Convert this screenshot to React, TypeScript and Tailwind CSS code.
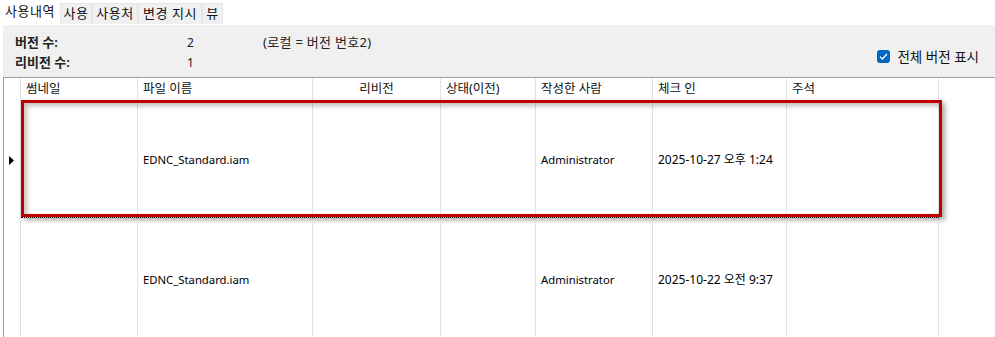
import React from "react";

const FONT = { fontFamily: '"Noto Sans", "Noto Sans CJK KR", sans-serif' };

const TABS = [
  { label: "사용내역", w: "w-[60px]", active: true },
  { label: "사용", w: "w-[32px]" },
  { label: "사용처", w: "w-[46px]" },
  { label: "변경 지시", w: "w-[64px]" },
  { label: "뷰", w: "w-[21px]" },
];

const COLS = [
  { label: "썸네일", w: "w-[117px]" },
  { label: "파일 이름", w: "w-[175px]" },
  { label: "리비전", w: "w-[128px]", center: true },
  { label: "상태(이전)", w: "w-[95px]" },
  { label: "작성한 사람", w: "w-[117px]" },
  { label: "체크 인", w: "w-[134px]" },
  { label: "주석", w: "w-[152px]" },
];

const ROWS = [
  { file: "EDNC_Standard.iam", author: "Administrator", date: "2025-10-27 오후 1:24", current: true },
  { file: "EDNC_Standard.iam", author: "Administrator", date: "2025-10-22 오전 9:37" },
];

function Row({ row }: { row: (typeof ROWS)[number] }) {
  const cells = ["", row.file, "", "", row.author, row.date, ""];
  return (
    <div className="relative flex h-[120px]">
      <div className="flex w-[17px] items-center justify-center border-r border-[#e3e3e3]">
        {row.current && (
          <svg width="6" height="9" viewBox="0 0 6 9">
            <path d="M0 0 L5 4.5 L0 9 Z" fill="#000" />
          </svg>
        )}
      </div>
      {cells.map((c, i) => (
        <div
          key={i}
          className={`${COLS[i].w} flex items-center border-r border-[#e3e3e3] pl-[5px] text-black ${
            i === 5 ? "text-[12px]" : "text-[11.3px]"
          }`}
        >
          {c}
        </div>
      ))}
      <div className="flex-1" />
      {row.current && (
        <>
          <div className="pointer-events-none absolute left-[17px] top-0 h-[117px] w-[921px] border-[3px] border-[#c00000] shadow-[3px_3px_5px_rgba(0,0,0,0.35),inset_3px_3px_5px_rgba(0,0,0,0.25)]" />
          <div className="pointer-events-none absolute left-[17px] top-[117px] w-[918px] border-t border-dotted border-black" />
        </>
      )}
    </div>
  );
}

export default function App() {
  return (
    <div className="h-[337px] w-[995px] overflow-hidden bg-white" style={FONT}>
      {/* tabs */}
      <div className="flex h-[24px] items-end">
        {TABS.map((t) => (
          <div
            key={t.label}
            className={`${t.w} flex items-center justify-center text-[13px] tracking-[0.6px] text-[#111] ${
              t.active
                ? "h-[24px] bg-white"
                : "h-[21px] border-l border-t border-r border-[#e6e6e6] bg-[#f0f0f0]"
            }`}
          >
            {t.label}
          </div>
        ))}
        <div className="flex-1" />
      </div>

      {/* info panel */}
      <div className="ml-[3px] mt-[1px] flex h-[52px] bg-[#f0f0f0] text-[13px] text-[#222]">
        <div className="flex flex-col pl-[12px] pt-[8px]">
          <div className="flex h-[20px] items-center">
            <span className="w-[172px] font-semibold">버전 수:</span>
            <span className="w-[76px] text-[12px]">2</span>
            <span className="tracking-[0.3px]">(로컬 = 버전 번호2)</span>
          </div>
          <div className="flex h-[20px] items-center">
            <span className="w-[172px] font-semibold">리비전 수:</span>
            <span className="text-[12px]">1</span>
          </div>
        </div>
        <div className="flex-1" />
        <div className="flex items-end pb-[10px] pr-[16px]">
          <label className="flex items-center gap-[7px]">
            <span className="flex h-[13px] w-[13px] items-center justify-center rounded-[3px] bg-[#0067c0]">
              <svg width="9" height="7" viewBox="0 0 9 7">
                <path d="M1 3.6 L3.4 6 L8 1" stroke="#fff" strokeWidth="1.3" fill="none" />
              </svg>
            </span>
            <span className="text-[13.5px] text-[#111]">전체 버전 표시</span>
          </label>
        </div>
      </div>

      {/* grid */}
      <div className="ml-[3px] h-[260px] border-l border-t border-[#a0a0a0]">
        <div className="flex h-[22px]">
          <div className="w-[17px] border-r border-[#e3e3e3]" />
          {COLS.map((c) => (
            <div
              key={c.label}
              className={`${c.w} flex items-center border-r border-[#e3e3e3] text-[12.5px] text-[#111] ${
                c.center ? "justify-center" : "pl-[5px]"
              }`}
            >
              {c.label}
            </div>
          ))}
          <div className="flex-1" />
        </div>
        {ROWS.map((r, i) => (
          <Row key={i} row={r} />
        ))}
      </div>
    </div>
  );
}
